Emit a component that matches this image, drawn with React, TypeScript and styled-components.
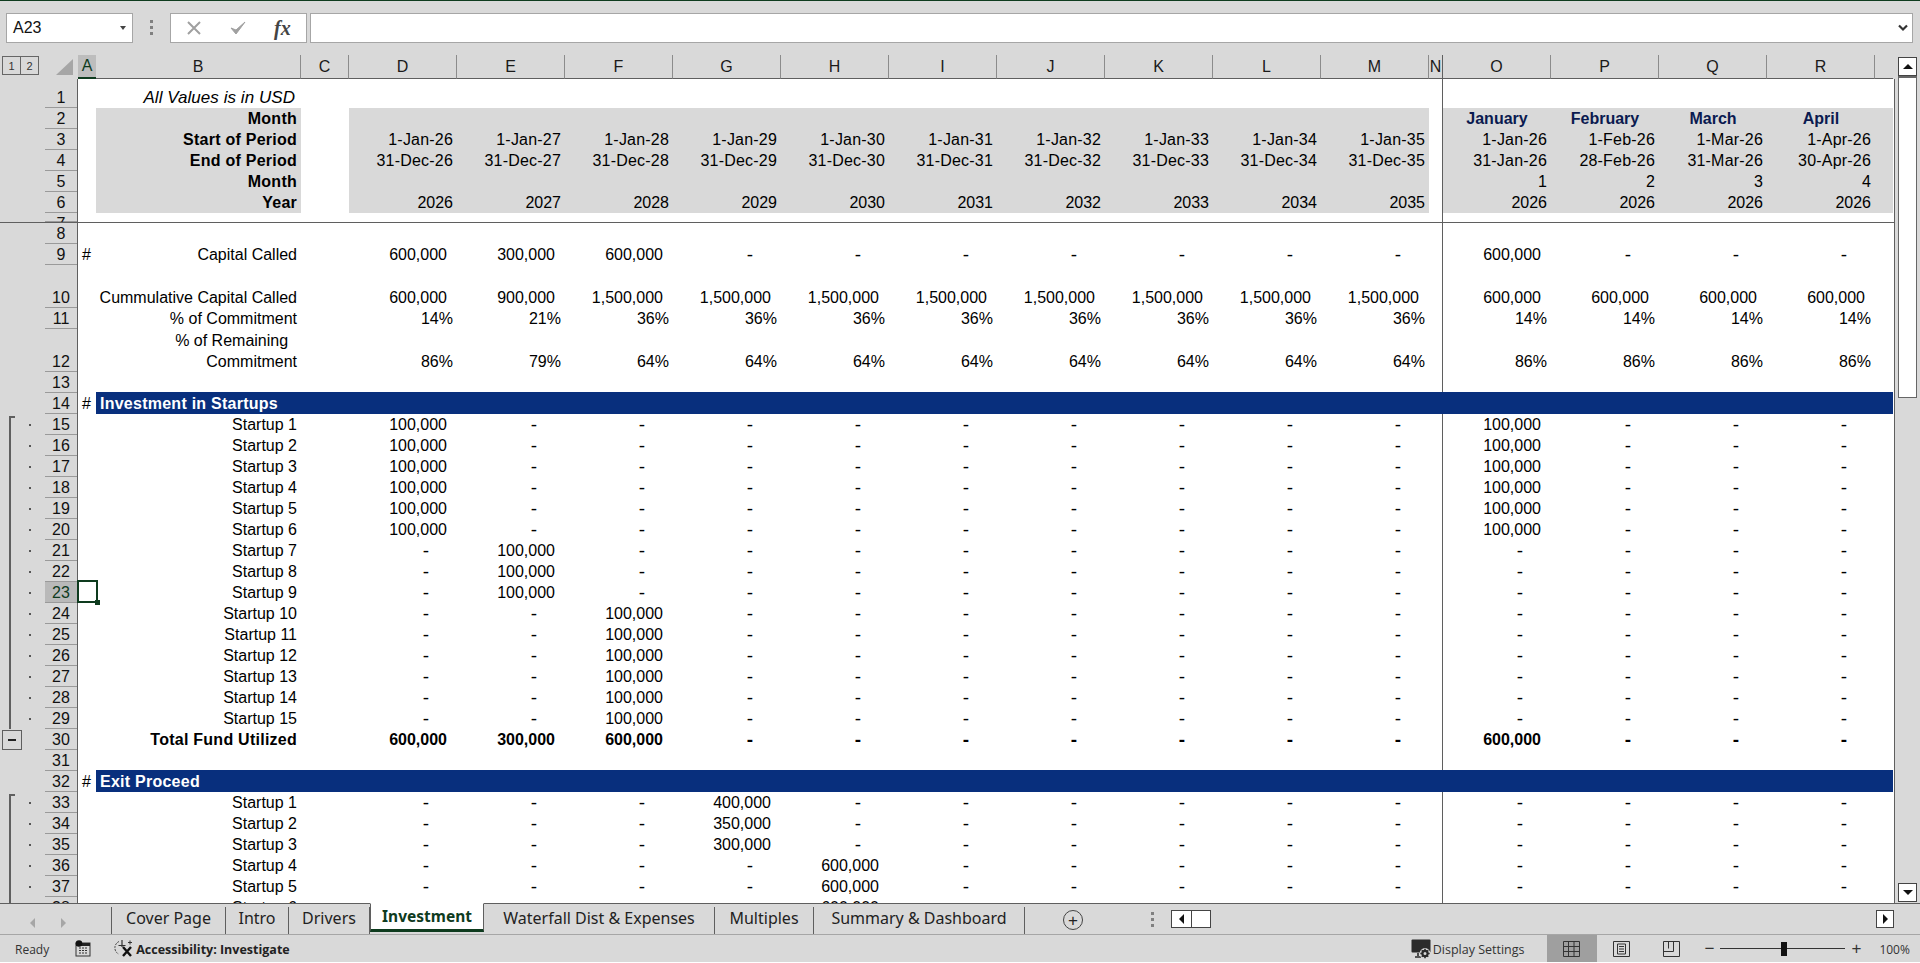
import React from 'react'
import styled, { createGlobalStyle, css } from 'styled-components'

const GRAY = '#d9d9d9'
const GREEN = '#0e3b1e'
const BLUE = '#082f7d'
const LINE = '#5f5f5f'

const GlobalStyle = createGlobalStyle`
  html, body { margin: 0; padding: 0; background: #fff; }
  body { font-family: "Liberation Sans", Arial, sans-serif; }
`

const sheetColumns = css`
  display: grid;
  grid-template-columns: 45px 33px 18px 205px 48px repeat(10, 108px) 14px repeat(4, 108px) 18px;
`

const Window = styled.div`
  width: 1920px;
  height: 962px;
  background: ${GRAY};
  display: flex;
  flex-direction: column;
  overflow: hidden;
  border-top: 1px solid ${GREEN};
  box-sizing: border-box;
`

/* ---------- formula bar ---------- */
const FormulaBar = styled.div`
  height: 54px;
  flex: none;
  display: flex;
  align-items: flex-start;
  padding: 12px 0 0 6px;
  box-sizing: border-box;
`
const NameBox = styled.div`
  width: 127px;
  height: 30px;
  box-sizing: border-box;
  background: #fff;
  border: 1px solid #a6a6a6;
  display: flex;
  align-items: center;
  justify-content: space-between;
  padding: 0 6px 0 6px;
  font-size: 16px;
  color: #111;
`
const Caret = styled.span`
  width: 0;
  height: 0;
  border-left: 3.5px solid transparent;
  border-right: 3.5px solid transparent;
  border-top: 4px solid #444;
`
const GripDots = styled.div`
  width: 3px;
  height: 15px;
  margin: 7px 17px 0 17px;
  background: repeating-linear-gradient(#808080 0 3px, transparent 3px 6px);
`
const FormulaButtons = styled.div`
  width: 137px;
  height: 30px;
  box-sizing: border-box;
  background: #fff;
  border: 1px solid #a6a6a6;
  display: flex;
  align-items: center;
  gap: 27px;
  padding-left: 15px;
`
const FxLabel = styled.span`
  font-family: "Liberation Serif", serif;
  font-style: italic;
  font-weight: 700;
  font-size: 20px;
  color: #444;
`
const FormulaInput = styled.div`
  width: 1603px;
  height: 30px;
  margin-left: 3px;
  box-sizing: border-box;
  background: #fff;
  border: 1px solid #a6a6a6;
  display: flex;
  align-items: center;
  justify-content: flex-end;
  padding-right: 4px;
`

/* ---------- sheet ---------- */
const Workspace = styled.div`
  height: 848px;
  flex: none;
  display: flex;
`
const SheetArea = styled.div`
  width: 1895px;
  flex: none;
  display: flex;
  flex-direction: column;
`
const ColumnHeaderRow = styled.div`
  ${sheetColumns}
  height: 24px;
  flex: none;
  box-sizing: border-box;
`
const HeaderCorner = styled.div`
  grid-column: span 2;
  display: flex;
  align-items: flex-start;
  padding: 1px 0 0 2px;
  border-bottom: 1px solid transparent;
`
const OutlineLevel = styled.div`
  width: 19px;
  height: 19px;
  box-sizing: border-box;
  border: 1px solid #666;
  margin-right: -1px;
  display: flex;
  align-items: center;
  justify-content: center;
  font-size: 11px;
  color: #333;
`
const CornerTriangle = styled.div`
  width: 17px;
  height: 16px;
  margin: 3px 0 0 18px;
  background: #a6a6a6;
  clip-path: polygon(100% 0, 100% 100%, 0 100%);
`
const ColumnLetter = styled.div<{ $active?: boolean; $freeze?: boolean; $last?: boolean }>`
  display: flex;
  align-items: center;
  justify-content: center;
  box-sizing: border-box;
  font-size: 16px;
  color: #1a1a1a;
  overflow: hidden;
  border-right: ${p => (p.$last ? 'none' : `1px solid ${p.$freeze ? LINE : '#8c8c8c'}`)};
  border-bottom: 1px solid ${LINE};
  ${p =>
    p.$active &&
    css`
      background: #bdbdbd;
      color: ${GREEN};
      border-right: none;
      border-bottom: 2px solid ${GREEN};
    `}
`
const Viewport = styled.div`
  height: 824px;
  flex: none;
  overflow: hidden;
  box-sizing: border-box;
  background: #fff;
  border-right: 1px solid ${LINE};
`
const Row = styled.div<{ $h: number; $freeze?: boolean }>`
  ${sheetColumns}
  height: ${p => p.$h}px;
  box-sizing: border-box;
  font-size: 16px;
  line-height: 21px;
  color: #000;
  ${p => p.$freeze && `border-bottom: 1px solid ${LINE};`}
`
const OutlineGutter = styled.div<{ $bracket?: 'start' | 'mid' }>`
  background-color: ${GRAY};
  background-repeat: no-repeat;
  display: flex;
  align-items: center;
  padding-left: 2px;
  ${p =>
    p.$bracket === 'mid' &&
    css`
      background-image: linear-gradient(${LINE}, ${LINE});
      background-size: 2px 100%;
      background-position: 9px 0;
    `}
  ${p =>
    p.$bracket === 'start' &&
    css`
      background-image: linear-gradient(${LINE}, ${LINE}), linear-gradient(${LINE}, ${LINE});
      background-size: 2px 19px, 6px 2px;
      background-position: 9px 2px, 9px 2px;
    `}
`
const OutlineDot = styled.span`
  width: 2px;
  height: 2px;
  background: #555;
  margin-left: 27px;
`
const CollapseButton = styled.div`
  width: 20px;
  height: 20px;
  box-sizing: border-box;
  border: 1px solid ${LINE};
  display: flex;
  align-items: center;
  justify-content: center;
  &::before {
    content: '';
    width: 8px;
    height: 2px;
    background: #222;
  }
`
const RowNumber = styled.div<{ $active?: boolean; $clip?: boolean }>`
  box-sizing: border-box;
  background: ${p => (p.$active ? '#b9b9b9' : GRAY)};
  color: ${p => (p.$active ? GREEN : '#111')};
  box-shadow: inset 0 -1px 0 #9a9a9a;
  border-right: 1px solid ${LINE};
  overflow: hidden;
  display: flex;
  justify-content: center;
  align-items: ${p => (p.$clip ? 'flex-start' : 'flex-end')};
`
const MarkerCell = styled.div<{ $selected?: boolean }>`
  position: relative;
  display: flex;
  align-items: flex-end;
  padding-left: 4px;
  ${p =>
    p.$selected &&
    css`
      &::before {
        content: '';
        position: absolute;
        inset: -2px -2px 0 -1px;
        border: 2px solid ${GREEN};
        z-index: 2;
      }
      &::after {
        content: '';
        position: absolute;
        right: -4px;
        bottom: -2px;
        width: 5px;
        height: 5px;
        background: ${GREEN};
        z-index: 3;
      }
    `}
`
const LabelCell = styled.div<{ $fill?: boolean; $bold?: boolean; $italic?: boolean }>`
  display: flex;
  flex-direction: column;
  justify-content: flex-end;
  align-items: flex-end;
  padding-right: ${p => (p.$italic ? 6 : 4)}px;
  white-space: nowrap;
  background: ${p => (p.$fill ? GRAY : 'transparent')};
  font-weight: ${p => (p.$bold ? 700 : 400)};
  font-style: ${p => (p.$italic ? 'italic' : 'normal')};
  ${p => p.$bold && 'letter-spacing: 0.25px;'}
  ${p => p.$italic && 'font-size: 17px; letter-spacing: 0.05px;'}
`
const SectionTitle = styled.div`
  grid-column: 4 / -1;
  margin-top: -1px;
  background: ${BLUE};
  color: #fff;
  font-weight: 700;
  padding-left: 4px;
  display: flex;
  align-items: flex-end;
  letter-spacing: 0.25px;
`
const Spacer = styled.div<{ $fill?: boolean; $freeze?: boolean }>`
  background: ${p => (p.$fill ? GRAY : 'transparent')};
  ${p => p.$freeze && `border-right: 1px solid ${LINE};`}
`
const ValueCell = styled.div<{
  $fill?: boolean
  $pad: number
  $bold?: boolean
  $center?: boolean
  $navy?: boolean
  $date?: boolean
  $dash?: boolean
}>`
  display: flex;
  align-items: flex-end;
  justify-content: ${p => (p.$center ? 'center' : 'flex-end')};
  padding-right: ${p => p.$pad}px;
  white-space: nowrap;
  background: ${p => (p.$fill ? GRAY : 'transparent')};
  font-weight: ${p => (p.$bold ? 700 : 400)};
  color: ${p => (p.$navy ? '#0a1a50' : '#000')};
  ${p => p.$date && 'letter-spacing: 0.2px;'}
  ${p => p.$dash && 'font-size: 19px;'}
`

/* ---------- scrollbar ---------- */
const VerticalScroll = styled.div`
  width: 25px;
  flex: none;
  display: flex;
  flex-direction: column;
  align-items: flex-start;
  padding: 2px 0 1px 3px;
  box-sizing: border-box;
`
const ScrollButton = styled.div`
  width: 19px;
  height: 19px;
  flex: none;
  box-sizing: border-box;
  border: 1px solid #444;
  background: #fff;
  display: flex;
  align-items: center;
  justify-content: center;
`
const ScrollThumb = styled.div`
  width: 19px;
  height: 322px;
  flex: none;
  box-sizing: border-box;
  background: #fff;
  border: 1px solid #666;
  border-top-width: 2px;
`
const ScrollTrack = styled.div`
  flex: 1;
`
const Arrow = styled.span<{ $dir: 'up' | 'down' | 'left' | 'right'; $color?: string }>`
  width: 0;
  height: 0;
  ${p => {
    const c = p.$color || '#111'
    if (p.$dir === 'up') return `border-left:5px solid transparent;border-right:5px solid transparent;border-bottom:5px solid ${c};`
    if (p.$dir === 'down') return `border-left:5px solid transparent;border-right:5px solid transparent;border-top:5px solid ${c};`
    if (p.$dir === 'left') return `border-top:5px solid transparent;border-bottom:5px solid transparent;border-right:5px solid ${c};`
    return `border-top:5px solid transparent;border-bottom:5px solid transparent;border-left:5px solid ${c};`
  }}
`

/* ---------- sheet tabs ---------- */
const TabBar = styled.div`
  height: 32px;
  flex: none;
  box-sizing: border-box;
  border-top: 1px solid ${LINE};
  border-bottom: 1px solid #a6a6a6;
  display: flex;
  align-items: flex-start;
`
const TabNav = styled.div`
  width: 112px;
  height: 27px;
  flex: none;
  display: flex;
  align-items: center;
  gap: 26px;
  padding: 4px 0 0 30px;
  box-sizing: border-box;
  border-right: 1px solid ${LINE};
  margin-top: 3px;
`
const Tab = styled.div<{ $w: number; $active?: boolean }>`
  width: ${p => p.$w}px;
  flex: none;
  box-sizing: border-box;
  display: flex;
  align-items: center;
  justify-content: center;
  font-family: "Noto Sans", "Open Sans", sans-serif;
  font-size: 16px;
  color: #222;
  white-space: nowrap;
  ${p =>
    p.$active
      ? css`
          height: 29px;
          margin-top: -1px;
          padding-bottom: 1px;
          font-size: 15.5px;
          background: #fff;
          color: ${GREEN};
          font-weight: 700;
          border-left: 1px solid ${LINE};
          border-right: 1px solid ${LINE};
          border-bottom: 3px solid ${GREEN};
          border-top: 1px solid #fff;
        `
      : css`
          height: 27px;
          margin-top: 3px;
          padding-bottom: 6px;
          border-right: 1px solid ${LINE};
        `}
`
const AddSheet = styled.div`
  width: 20px;
  height: 20px;
  box-sizing: border-box;
  margin: 6px 0 0 38px;
  border: 1.5px solid #444;
  border-radius: 50%;
  color: #222;
  display: flex;
  align-items: center;
  justify-content: center;
  font-size: 17px;
  line-height: 1;
`
const TabGrip = styled(GripDots)`
  margin: 8px 17px 0 68px;
`
const HScrollLeft = styled.div`
  width: 40px;
  height: 18px;
  margin-top: 6px;
  flex: none;
  display: flex;
  background: #fff;
  border: 1px solid #444;
  box-sizing: border-box;
`
const HScrollButton = styled.div`
  width: 19px;
  flex: none;
  display: flex;
  align-items: center;
  justify-content: center;
  background: #fff;
  border-right: 1px solid #444;
`
const HScrollRight = styled.div`
  width: 18px;
  height: 18px;
  margin: 6px 0 0 665px;
  flex: none;
  display: flex;
  align-items: center;
  justify-content: center;
  background: #fff;
  border: 1px solid #444;
  box-sizing: border-box;
`

/* ---------- status bar ---------- */
const StatusBar = styled.div`
  height: 27px;
  flex: none;
  display: flex;
  align-items: center;
  font-family: "Open Sans", "Noto Sans", sans-serif;
  font-size: 12px;
  color: #333;
`
const StatusText = styled.span<{ $bold?: boolean; $size?: number }>`
  font-weight: ${p => (p.$bold ? 700 : 400)};
  font-size: ${p => p.$size || 12}px;
  color: ${p => (p.$bold ? '#222' : '#333')};
  white-space: nowrap;
  position: relative;
  top: 1px;
`
const StatusItem = styled.span<{ $left: number }>`
  margin-left: ${p => p.$left}px;
  display: flex;
`
const ViewButton = styled.div<{ $active?: boolean; $w: number; $left?: number }>`
  width: ${p => p.$w}px;
  height: 27px;
  flex: none;
  margin-left: ${p => p.$left || 0}px;
  display: flex;
  align-items: center;
  justify-content: center;
  background: ${p => (p.$active ? '#9f9f9f' : 'transparent')};
`
const ZoomSign = styled.span<{ $left?: number }>`
  font-size: 17px;
  line-height: 1;
  color: #333;
  margin-left: ${p => p.$left || 0}px;
  font-family: "Liberation Sans", sans-serif;
`
const ZoomTrack = styled.div`
  width: 125px;
  height: 1px;
  margin: 0 6px;
  background: #333;
  display: flex;
  align-items: center;
  padding-left: 61px;
  box-sizing: border-box;
`
const ZoomThumb = styled.div`
  width: 6px;
  height: 14px;
  flex: none;
  background: #111;
`

/* ---------- data ---------- */
const years = [26, 27, 28, 29, 30, 31, 32, 33, 34, 35]
const D = '-'
const rep = (v: string, n: number) => Array.from({ length: n }, () => v)

type RowData = {
  n: number
  h?: number
  hash?: boolean
  label?: React.ReactNode
  bold?: boolean
  italic?: boolean
  head?: boolean
  vals?: string[]
  months?: boolean
  section?: string
}

// one startup row, amount goes in the given column index
const startup = (n: number, no: number, col: number, amount: string, monthly: boolean): RowData => {
  const vals = rep(D, 14)
  vals[col] = amount
  if (monthly) vals[10] = amount
  return { n, label: `Startup ${no}`, vals }
}

const rows: RowData[] = [
  { n: 1, h: 29, label: 'All Values is in USD', italic: true },
  { n: 2, head: true, label: 'Month', bold: true, months: true },
  {
    n: 3,
    head: true,
    label: 'Start of Period',
    bold: true,
    vals: [...years.map(y => `1-Jan-${y}`), '1-Jan-26', '1-Feb-26', '1-Mar-26', '1-Apr-26'],
  },
  {
    n: 4,
    head: true,
    label: 'End of Period',
    bold: true,
    vals: [...years.map(y => `31-Dec-${y}`), '31-Jan-26', '28-Feb-26', '31-Mar-26', '30-Apr-26'],
  },
  { n: 5, head: true, label: 'Month', bold: true, vals: [...rep('', 10), '1', '2', '3', '4'] },
  { n: 6, head: true, label: 'Year', bold: true, vals: [...years.map(y => `20${y}`), ...rep('2026', 4)] },
  { n: 7, h: 10 },
  { n: 8 },
  {
    n: 9,
    hash: true,
    label: 'Capital Called',
    vals: ['600,000', '300,000', '600,000', ...rep(D, 7), '600,000', D, D, D],
  },
  {
    n: 10,
    h: 43,
    label: 'Cummulative Capital Called',
    vals: ['600,000', '900,000', ...rep('1,500,000', 8), ...rep('600,000', 4)],
  },
  { n: 11, label: '% of Commitment', vals: ['14%', '21%', ...rep('36%', 8), ...rep('14%', 4)] },
  {
    n: 12,
    h: 43,
    label: (
      <>
        <span>% of Remaining&nbsp;&nbsp;</span>
        <span>Commitment</span>
      </>
    ),
    vals: ['86%', '79%', ...rep('64%', 8), ...rep('86%', 4)],
  },
  { n: 13 },
  { n: 14, hash: true, section: 'Investment in Startups' },
  ...[1, 2, 3, 4, 5, 6].map((no, i) => startup(15 + i, no, 0, '100,000', true)),
  ...[7, 8, 9].map((no, i) => startup(21 + i, no, 1, '100,000', false)),
  ...[10, 11, 12, 13, 14, 15].map((no, i) => startup(24 + i, no, 2, '100,000', false)),
  {
    n: 30,
    label: 'Total Fund Utilized',
    bold: true,
    vals: ['600,000', '300,000', '600,000', ...rep(D, 7), '600,000', D, D, D],
  },
  { n: 31 },
  { n: 32, hash: true, section: 'Exit Proceed' },
  startup(33, 1, 3, '400,000', false),
  startup(34, 2, 3, '350,000', false),
  startup(35, 3, 3, '300,000', false),
  startup(36, 4, 4, '600,000', false),
  startup(37, 5, 4, '600,000', false),
  startup(38, 6, 4, '600,000', false),
]

const monthNames = ['January', 'February', 'March', 'April']
const columnLetters = ['D', 'E', 'F', 'G', 'H', 'I', 'J', 'K', 'L', 'M']

const padFor = (v: string) => {
  if (v === D) return 28
  if (v.includes(',')) return 10
  return 4
}

const bracketFor = (n: number): 'start' | 'mid' | undefined => {
  if (n === 15 || n === 33) return 'start'
  if ((n > 15 && n < 30) || n > 33) return 'mid'
  return undefined
}

const Value = ({ v, head, bold }: { v: string; head?: boolean; bold?: boolean }) => (
  <ValueCell $fill={head} $bold={bold && !head} $pad={padFor(v)} $date={/[a-z]/i.test(v)} $dash={v === D}>
    {v}
  </ValueCell>
)

const SheetRow = ({ row }: { row: RowData }) => {
  const { n, h = 21, hash, label, bold, italic, head, vals, months, section } = row
  const bracket = bracketFor(n)
  const values = vals || rep('', 14)

  return (
    <Row $h={h} $freeze={n === 7}>
      <OutlineGutter $bracket={bracket}>
        {bracket !== undefined && <OutlineDot />}
        {n === 30 && <CollapseButton />}
      </OutlineGutter>
      <RowNumber $active={n === 23} $clip={n === 7}>
        {n}
      </RowNumber>
      <MarkerCell $selected={n === 23}>{hash ? '#' : ''}</MarkerCell>
      {section ? (
        <SectionTitle>{section}</SectionTitle>
      ) : (
        <>
          <LabelCell $fill={head} $bold={bold} $italic={italic}>
            {label}
          </LabelCell>
          <Spacer />
          {values.slice(0, 10).map((v, i) => (
            <Value key={i} v={v} head={head} bold={bold} />
          ))}
          <Spacer $freeze />
          {months
            ? monthNames.map(m => (
                <ValueCell key={m} $fill $bold $center $navy $pad={0}>
                  {m}
                </ValueCell>
              ))
            : values.slice(10).map((v, i) => <Value key={i} v={v} head={head} bold={bold} />)}
          <Spacer $fill={head} />
        </>
      )}
    </Row>
  )
}

/* ---------- small drawings ---------- */
const CancelIcon = () => (
  <svg width="16" height="16" viewBox="0 0 16 16">
    <path d="M2 2 L14 14 M14 2 L2 14" stroke="#a0a0a0" strokeWidth="2" fill="none" />
  </svg>
)
const EnterIcon = () => (
  <svg width="18" height="16" viewBox="0 0 18 16">
    <path d="M2 8 L7 14 L16 2 L7 10 Z" fill="#a0a0a0" stroke="#a0a0a0" strokeWidth="1" />
  </svg>
)
const ExpandIcon = () => (
  <svg width="10" height="8" viewBox="0 0 10 8">
    <path d="M1 1.5 L5 5.5 L9 1.5" stroke="#333" strokeWidth="2.2" fill="none" />
  </svg>
)
const MacroIcon = () => (
  <svg width="16" height="17" viewBox="0 0 16 17">
    <rect x="1" y="3" width="14" height="13" fill="#d9d9d9" stroke="#333" strokeWidth="1" />
    <rect x="1" y="3" width="14" height="3" fill="#222" />
    <circle cx="4" cy="3.5" r="3.3" fill="#111" />
    <path d="M4 8h2M7 8h2M10 8h2M4 10.5h2M7 10.5h2M10 10.5h2M4 13h2M7 13h2M10 13h2" stroke="#333" strokeWidth="1.2" />
  </svg>
)
const AccessibilityIcon = () => (
  <svg width="21" height="20" viewBox="0 0 21 20">
    <path d="M6 2.5 A7 7 0 0 0 5.5 15" stroke="#444" strokeWidth="1" strokeDasharray="2 1" fill="none" />
    <path d="M9 1v7M5.5 6.5h7" stroke="#333" strokeWidth="1.2" fill="none" />
    <path d="M10 8 L18 17 M18 8 L10 17" stroke="#111" strokeWidth="2.4" fill="none" />
    <path d="M15 3.5h4M17 1.5v4" stroke="#333" strokeWidth="1" fill="none" />
  </svg>
)
const DisplayIcon = () => (
  <svg width="20" height="20" viewBox="0 0 20 20">
    <rect x="0.5" y="0.5" width="19" height="13" rx="1" fill="#2b2b2b" />
    <path d="M7 14v3M4 18h6" stroke="#2b2b2b" strokeWidth="1.6" />
    <circle cx="14" cy="14.5" r="5.4" fill="#d9d9d9" />
    <circle cx="14" cy="14.5" r="2.6" fill="none" stroke="#2b2b2b" strokeWidth="2.2" />
    <path d="M14 9.8v2M14 17.2v2M9.3 14.5h2M16.7 14.5h2M10.8 11.3l1.4 1.4M15.8 16.3l1.4 1.4M17.2 11.3l-1.4 1.4M12.2 16.3l-1.4 1.4" stroke="#2b2b2b" strokeWidth="1.6" />
  </svg>
)
const GridViewIcon = () => (
  <svg width="17" height="16" viewBox="0 0 17 16">
    <path d="M.5.5h16v15H.5zM.5 5.5h16M.5 10.5h16M5.5.5v15M11 .5v15" fill="none" stroke="#333" strokeWidth="1" />
  </svg>
)
const PageViewIcon = () => (
  <svg width="17" height="16" viewBox="0 0 17 16">
    <path d="M.5.5h16v15H.5z" fill="none" stroke="#333" strokeWidth="1" />
    <path d="M4.5 3h8v10h-8z" fill="none" stroke="#333" strokeWidth="1" />
    <path d="M6 5.5h5M6 8h5M6 10.5h5" stroke="#333" strokeWidth="1" />
  </svg>
)
const BreakViewIcon = () => (
  <svg width="17" height="16" viewBox="0 0 17 16">
    <path d="M.5.5h16v15H.5zM.5 10.5h10M10.5 10.5V.5M5.5.5v7" fill="none" stroke="#333" strokeWidth="1" />
  </svg>
)

export default function App() {
  return (
    <Window>
      <GlobalStyle />
      <FormulaBar>
        <NameBox>
          A23
          <Caret />
        </NameBox>
        <GripDots />
        <FormulaButtons>
          <CancelIcon />
          <EnterIcon />
          <FxLabel>fx</FxLabel>
        </FormulaButtons>
        <FormulaInput>
          <ExpandIcon />
        </FormulaInput>
      </FormulaBar>

      <Workspace>
        <SheetArea>
          <ColumnHeaderRow>
            <HeaderCorner>
              <OutlineLevel>1</OutlineLevel>
              <OutlineLevel>2</OutlineLevel>
              <CornerTriangle />
            </HeaderCorner>
            <ColumnLetter $active>A</ColumnLetter>
            <ColumnLetter>B</ColumnLetter>
            <ColumnLetter>C</ColumnLetter>
            {columnLetters.map(l => (
              <ColumnLetter key={l}>{l}</ColumnLetter>
            ))}
            <ColumnLetter $freeze>N</ColumnLetter>
            {['O', 'P', 'Q', 'R'].map(l => (
              <ColumnLetter key={l}>{l}</ColumnLetter>
            ))}
            <ColumnLetter $last />
          </ColumnHeaderRow>
          <Viewport>
            {rows.map(r => (
              <SheetRow key={r.n} row={r} />
            ))}
          </Viewport>
        </SheetArea>
        <VerticalScroll>
          <ScrollButton>
            <Arrow $dir="up" />
          </ScrollButton>
          <ScrollThumb />
          <ScrollTrack />
          <ScrollButton>
            <Arrow $dir="down" />
          </ScrollButton>
        </VerticalScroll>
      </Workspace>

      <TabBar>
        <TabNav>
          <Arrow $dir="left" $color="#a6a6a6" />
          <Arrow $dir="right" $color="#a6a6a6" />
        </TabNav>
        <Tab $w={114}>Cover Page</Tab>
        <Tab $w={63}>Intro</Tab>
        <Tab $w={81}>Drivers</Tab>
        <Tab $w={114} $active>
          Investment
        </Tab>
        <Tab $w={231}>Waterfall Dist &amp; Expenses</Tab>
        <Tab $w={99}>Multiples</Tab>
        <Tab $w={211}>Summary &amp; Dashboard</Tab>
        <AddSheet>+</AddSheet>
        <TabGrip />
        <HScrollLeft>
          <HScrollButton>
            <Arrow $dir="left" />
          </HScrollButton>
        </HScrollLeft>
        <HScrollRight>
          <Arrow $dir="right" />
        </HScrollRight>
      </TabBar>

      <StatusBar>
        <StatusItem $left={15}>
          <StatusText>Ready</StatusText>
        </StatusItem>
        <StatusItem $left={26}>
          <MacroIcon />
        </StatusItem>
        <StatusItem $left={22}>
          <AccessibilityIcon />
        </StatusItem>
        <StatusItem $left={2}>
          <StatusText $bold $size={12.5}>
            Accessibility: Investigate
          </StatusText>
        </StatusItem>
        <StatusItem $left={1121}>
          <DisplayIcon />
        </StatusItem>
        <StatusItem $left={2}>
          <StatusText $size={12.5}>Display Settings</StatusText>
        </StatusItem>
        <ViewButton $active $w={50} $left={22}>
          <GridViewIcon />
        </ViewButton>
        <ViewButton $w={50}>
          <PageViewIcon />
        </ViewButton>
        <ViewButton $w={50}>
          <BreakViewIcon />
        </ViewButton>
        <ZoomSign $left={8}>−</ZoomSign>
        <ZoomTrack>
          <ZoomThumb />
        </ZoomTrack>
        <ZoomSign>+</ZoomSign>
        <StatusItem $left={18}>
          <StatusText>100%</StatusText>
        </StatusItem>
      </StatusBar>
    </Window>
  )
}
